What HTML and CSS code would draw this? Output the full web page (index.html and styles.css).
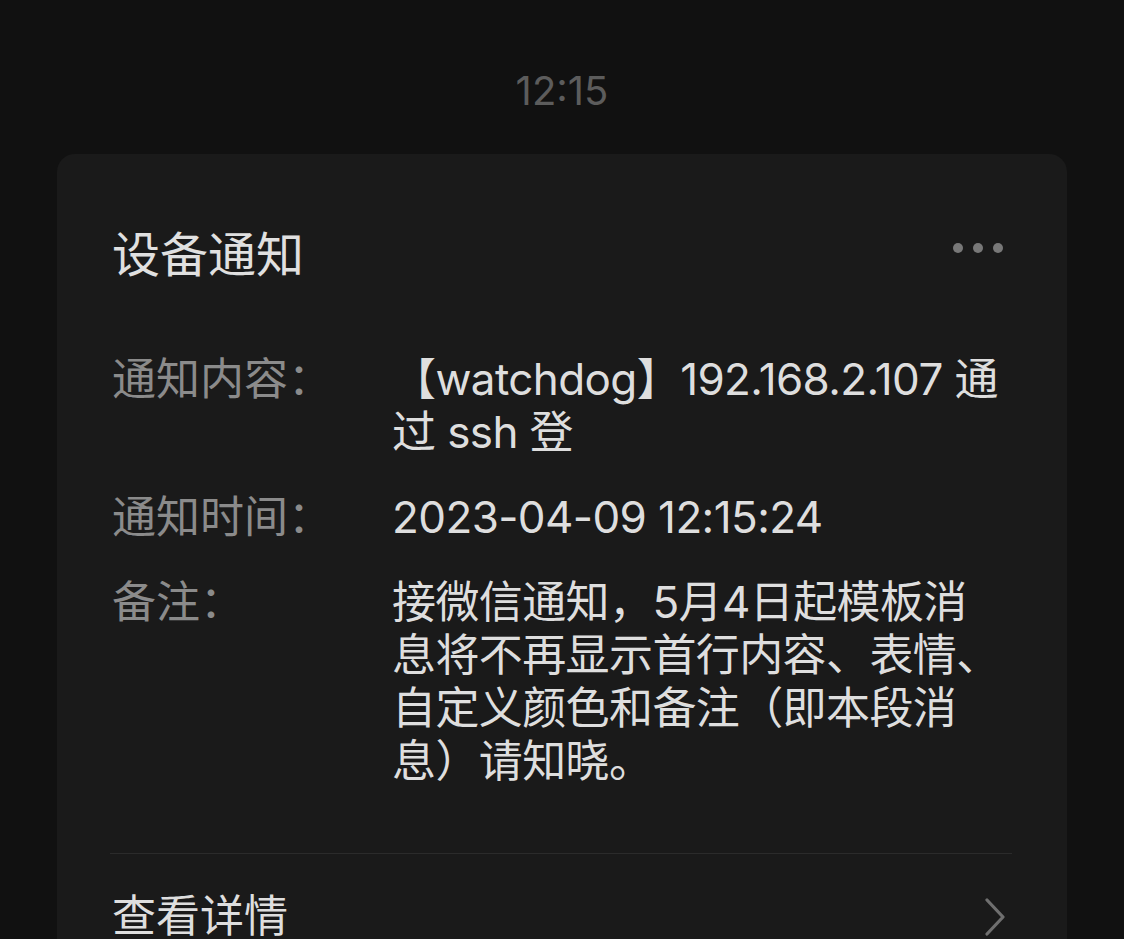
FILE: index.html
```html
<!DOCTYPE html>
<html lang="zh-CN">
<head>
<meta charset="utf-8">
<title>设备通知</title>
<link rel="stylesheet" href="styles.css">
</head>
<body>
<div class="screen">
  <div class="clock">12:15</div>
  <div class="card">
    <div class="card-head">
      <div class="title">设备通知</div>
      <div class="more"><span></span><span></span><span></span></div>
    </div>
    <div class="rows">
      <div class="row">
        <div class="label">通知内容：</div>
        <div class="value">【watchdog】192.168.2.107 通过 ssh 登</div>
      </div>
      <div class="row">
        <div class="label">通知时间：</div>
        <div class="value">2023-04-09 12:15:24</div>
      </div>
      <div class="row">
        <div class="label">备注：</div>
        <div class="value">接微信通知，5月4日起模板消息将不再显示首行内容、表情、自定义颜色和备注（即本段消息）请知晓。</div>
      </div>
    </div>
    <div class="divider"></div>
    <div class="footer">
      <div class="footer-text">查看详情</div>
      <svg class="chevron" width="22" height="38" viewBox="0 0 22 38">
        <path d="M3 2 L19 19 L3 36" fill="none" stroke="#6f6f6f" stroke-width="3.2" stroke-linecap="round" stroke-linejoin="round"/>
      </svg>
    </div>
  </div>
</div>
</body>
</html>
```

FILE: styles.css
```css
html, body {
  margin: 0;
  padding: 0;
  background: #111111;
  overflow: hidden;
}

body {
  font-family: Inter, "Noto Sans CJK SC", sans-serif;
  color: #dedede;
}

.screen {
  width: 1124px;
  height: 939px;
  padding-top: 67px;
  box-sizing: border-box;
}

.clock {
  text-align: center;
  font-size: 40px;
  line-height: 48px;
  color: #5c5c5c;
}

.card {
  margin: 39px 57px 0 57px;
  background: #1a1a1a;
  border-radius: 18px;
  padding: 73px 55px 40px 55px;
}

.card-head {
  display: flex;
  justify-content: space-between;
  align-items: center;
  height: 56px;
}

.title {
  font-size: 48px;
  line-height: 56px;
  color: #e0e0e0;
}

.more {
  display: flex;
  gap: 10px;
  margin-right: 9px;
  margin-top: -14px;
}

.more span {
  width: 10px;
  height: 10px;
  border-radius: 50%;
  background: #787878;
}

.rows {
  margin-top: 70px;
  display: flex;
  flex-direction: column;
  gap: 32px;
}

.row {
  display: flex;
  font-size: 44px;
  line-height: 53px;
}

.label {
  width: 280px;
  flex: none;
  color: #8b8b8b;
}

.value {
  width: 612px;
  color: #dedede;
  letter-spacing: -0.6px;
}

.divider {
  margin-top: 65px;
  margin-left: -2px;
  height: 1px;
  background: #2b2b2b;
}

.footer {
  display: flex;
  justify-content: space-between;
  align-items: center;
  padding-top: 36px;
}

.footer-text {
  font-size: 44px;
  line-height: 53px;
  color: #dedede;
}

.chevron {
  margin-right: 6px;
}
```
